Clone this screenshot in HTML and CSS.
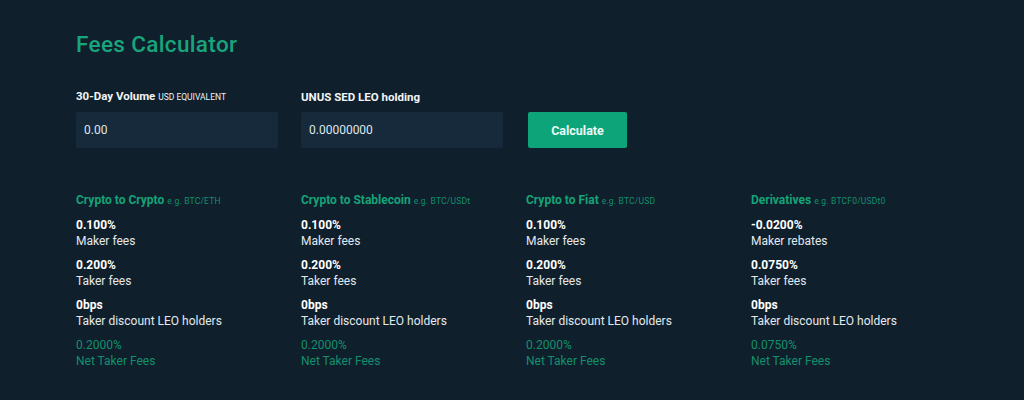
FILE: index.html
```html
<!DOCTYPE html>
<html lang="en">
<head>
    <meta charset="UTF-8">
    <meta name="viewport" content="width=device-width, initial-scale=1.0">
    <title>Fees Calculator</title>
    <link rel="stylesheet" href="styles.css">
</head>
<body>
    <main class="calculator">
        <h1>Fees Calculator</h1>

        <form class="calc-form">
            <div class="field">
                <label for="volume">30-Day Volume <small>USD EQUIVALENT</small></label>
                <input type="text" id="volume" value="0.00">
            </div>
            <div class="field">
                <label for="leo">UNUS SED LEO holding</label>
                <input type="text" id="leo" value="0.00000000">
            </div>
            <button type="button">Calculate</button>
        </form>

        <section class="results">
            <div class="market">
                <h3>Crypto to Crypto <small>e.g. BTC/ETH</small></h3>
                <dl>
                    <dt>0.100%</dt><dd>Maker fees</dd>
                    <dt>0.200%</dt><dd>Taker fees</dd>
                    <dt>0bps</dt><dd>Taker discount LEO holders</dd>
                    <dt class="net">0.2000%</dt><dd class="net">Net Taker Fees</dd>
                </dl>
            </div>
            <div class="market">
                <h3>Crypto to Stablecoin <small>e.g. BTC/USDt</small></h3>
                <dl>
                    <dt>0.100%</dt><dd>Maker fees</dd>
                    <dt>0.200%</dt><dd>Taker fees</dd>
                    <dt>0bps</dt><dd>Taker discount LEO holders</dd>
                    <dt class="net">0.2000%</dt><dd class="net">Net Taker Fees</dd>
                </dl>
            </div>
            <div class="market">
                <h3>Crypto to Fiat <small>e.g. BTC/USD</small></h3>
                <dl>
                    <dt>0.100%</dt><dd>Maker fees</dd>
                    <dt>0.200%</dt><dd>Taker fees</dd>
                    <dt>0bps</dt><dd>Taker discount LEO holders</dd>
                    <dt class="net">0.2000%</dt><dd class="net">Net Taker Fees</dd>
                </dl>
            </div>
            <div class="market">
                <h3>Derivatives <small>e.g. BTCF0/USDt0</small></h3>
                <dl>
                    <dt>-0.0200%</dt><dd>Maker rebates</dd>
                    <dt>0.0750%</dt><dd>Taker fees</dd>
                    <dt>0bps</dt><dd>Taker discount LEO holders</dd>
                    <dt class="net">0.0750%</dt><dd class="net">Net Taker Fees</dd>
                </dl>
            </div>
        </section>
    </main>
</body>
</html>
```

FILE: styles.css
```css
body {
    font-family: Roboto, 'Liberation Sans', sans-serif;
    margin: 0;
    padding: 0;
    background: #0f1f2c;
    color: #e8eef2;
    height: 400px;
    overflow: hidden;
}

.calculator {
    padding: 31px 76px 0;
}

h1 {
    margin: 0;
    color: #18a57c;
    font-size: 22.5px;
    font-weight: 500;
    line-height: 26px;
    letter-spacing: 0.35px;
}

.calc-form {
    display: flex;
    align-items: flex-end;
    gap: 24px;
    margin-top: 32px;
}

.field {
    display: flex;
    flex-direction: column;
    gap: 8px;
}

.field + .field {
    margin-left: -1px;
}

.field label {
    font-size: 11.5px;
    font-weight: 700;
    line-height: 14px;
    color: #f2f5f7;
}

.field label small {
    font-size: 8.5px;
    font-weight: 400;
}

.field input {
    width: 202px;
    height: 36px;
    box-sizing: border-box;
    padding: 0 8px;
    border: none;
    border-radius: 2px;
    background: #172a3b;
    color: #dfe6eb;
    font-family: inherit;
    font-size: 12px;
    outline: none;
}

.calc-form button {
    width: 99px;
    height: 36px;
    margin-left: 1px;
    border: none;
    border-radius: 2px;
    background: #0ea47a;
    color: #e8fbf4;
    font-family: inherit;
    font-size: 12.5px;
    font-weight: 700;
    cursor: pointer;
}

.results {
    display: grid;
    grid-template-columns: repeat(4, 225px);
    margin-top: 44px;
}

.market h3 {
    margin: 0;
    color: #16a378;
    font-size: 12px;
    font-weight: 700;
    line-height: 16px;
}

.market h3 small {
    font-size: 8.5px;
    font-weight: 400;
    letter-spacing: 0.2px;
    opacity: 0.85;
}

.market dl {
    margin: 8px 0 0;
}

.market dt {
    font-size: 12px;
    font-weight: 700;
    line-height: 16px;
    color: #ffffff;
}

.market dd {
    margin: 0 0 8px;
    font-size: 12px;
    line-height: 16px;
    color: #e3e9ed;
}

.market .net {
    color: #14906c;
    font-weight: 400;
}
```
